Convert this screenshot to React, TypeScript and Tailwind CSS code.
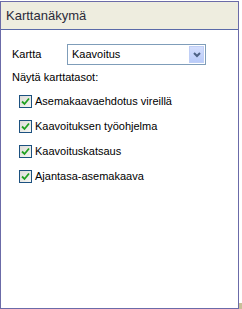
const layers = [
  "Asemakaavaehdotus vireillä",
  "Kaavoituksen työohjelma",
  "Kaavoituskatsaus",
  "Ajantasa-asemakaava",
]

function CheckBox() {
  return (
    <span className="flex items-center justify-center w-[13px] h-[13px] border border-[#1c5180] bg-gradient-to-br from-[#dcdcd7] to-[#f7f7f3]">
      <svg width="9" height="9" viewBox="0 0 9 9">
        <path d="M1 4.5 L3.5 7 L8 1.5" fill="none" stroke="#21a121" strokeWidth="1.8" />
      </svg>
    </span>
  )
}

export default function App() {
  return (
    <div className="w-[242px] h-[309px] bg-white flex items-end" style={{ fontFamily: "'Liberation Sans', Arial, sans-serif" }}>
      <div className="w-[239px] h-[308px] border border-[#6b6ba8] flex flex-col">
        {/* otsikko */}
        <div className="h-[28px] border-b border-[#5a6aa8] bg-[#eeeddf] flex items-center pl-[5px] text-[13px] text-[#2b2b3a]">
          Karttanäkymä
        </div>

        <div className="pl-[11px] pt-[14px] text-[11px] text-black">
          <div className="flex items-center h-[21px]">
            <span className="w-[55px]">Kartta</span>
            <div className="w-[139px] h-[21px] border border-[#7f9db9] flex items-center justify-between pl-[4px] pr-[1px]">
              <span>Kaavoitus</span>
              <span className="w-[15px] h-[17px] bg-gradient-to-b from-[#d4defd] to-[#b9cbf9] border border-[#c0cff6] flex items-center justify-center">
                <svg width="8" height="6" viewBox="0 0 8 6">
                  <path d="M1 1 L4 4 L7 1" fill="none" stroke="#4d6185" strokeWidth="2" />
                </svg>
              </span>
            </div>
          </div>

          <div className="mt-[4px] h-[16px] flex items-center">Näytä karttatasot:</div>

          <div className="flex flex-col gap-[12px] pl-[7px] mt-[10px]">
            {layers.map((l) => (
              <label key={l} className="flex items-center gap-[3px] h-[13px]">
                <CheckBox />
                <span>{l}</span>
              </label>
            ))}
          </div>
        </div>
      </div>
      <div className="w-[3px] h-[6px] bg-[#c8c09a]" />
    </div>
  )
}
